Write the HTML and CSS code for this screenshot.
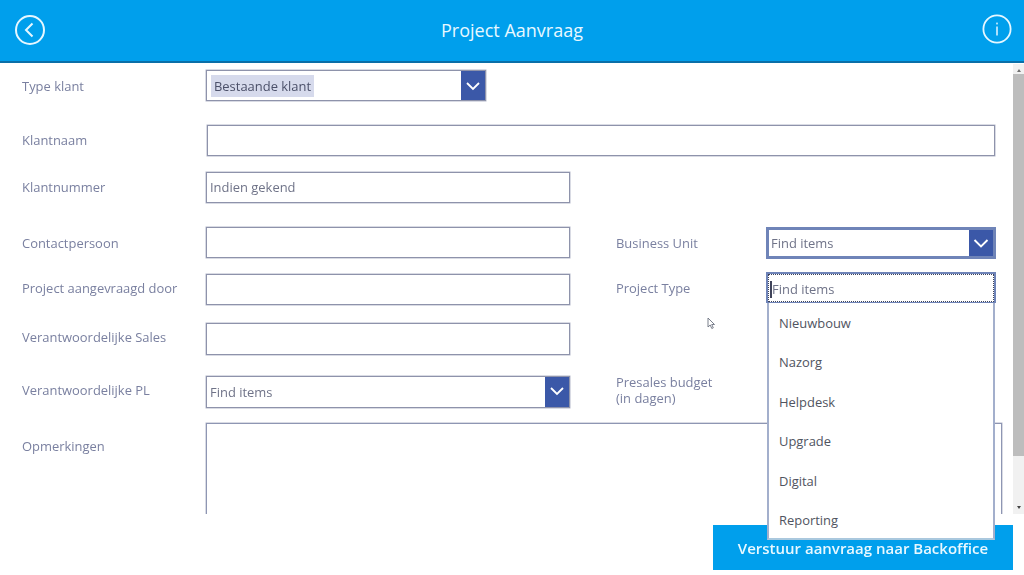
FILE: index.html
```html
<!DOCTYPE html>
<html lang="nl">
<head>
<meta charset="utf-8">
<title>Project Aanvraag</title>
<link rel="stylesheet" href="styles.css">
</head>
<body>
<header class="topbar">
  <svg class="icon" viewBox="0 0 30 30" width="30" height="30"><circle cx="15" cy="15" r="14" fill="none" stroke="#e6f7ff" stroke-width="2"/><path d="M17.500 8.500 11 15l6.500 6.500" fill="none" stroke="#e6f7ff" stroke-width="2"/></svg>
  <h1 class="title">Project Aanvraag</h1>
  <svg class="icon icon-info" viewBox="0 0 30 30" width="30" height="30"><circle cx="15" cy="15" r="13.600" fill="none" stroke="#e6f7ff" stroke-width="1.800"/><rect x="14.200" y="12.500" width="1.600" height="9" fill="#d8f1ff"/><rect x="14.200" y="8.600" width="1.600" height="1.800" fill="#d8f1ff"/></svg>
</header>
<div class="workspace">
  <form class="form">
    <div class="row row-1">
      <label class="label">Type klant</label>
      <div class="box combo combo-type">
        <span class="combo-value"><span class="chip">Bestaande klant</span></span>
        <span class="arrow"><svg viewBox="0 0 24 29" width="24" height="29"><path d="M6 12l6 6 6-6" fill="none" stroke="#fff" stroke-width="1.800"/></svg></span>
      </div>
    </div>
    <div class="row row-2">
      <label class="label label-up">Klantnaam</label>
      <div class="box field-wide"></div>
    </div>
    <div class="row row-3">
      <label class="label label-up">Klantnummer</label>
      <div class="box field"><span class="hint">Indien gekend</span></div>
    </div>
    <div class="row row-4">
      <label class="label">Contactpersoon</label>
      <div class="box field"></div>
      <label class="label label-side">Business Unit</label>
      <div class="box combo combo-side">
        <span class="combo-value"><span class="hint">Find items</span></span>
        <span class="arrow"><svg viewBox="0 0 24 26" width="24" height="26"><path d="M5.500 10l6.500 6.500 6.500-6.500" fill="none" stroke="#fff" stroke-width="1.900"/></svg></span>
      </div>
    </div>
    <div class="row row-5">
      <label class="label">Project aangevraagd door</label>
      <div class="box field field-low"></div>
      <label class="label label-side">Project Type</label>
      <div class="search">
        <div class="search-focus"><span class="caret"></span><span>Find items</span></div>
        <ul class="menu">
          <li>Nieuwbouw</li>
          <li>Nazorg</li>
          <li>Helpdesk</li>
          <li>Upgrade</li>
          <li>Digital</li>
          <li>Reporting</li>
        </ul>
      </div>
    </div>
    <div class="row row-6">
      <label class="label label-top">Verantwoordelijke Sales</label>
      <div class="box field field-tall"></div>
    </div>
    <div class="row row-7">
      <label class="label label-top">Verantwoordelijke PL</label>
      <div class="box combo combo-pl">
        <span class="combo-value"><span class="hint">Find items</span></span>
        <span class="arrow"><svg viewBox="0 0 24 28" width="24" height="28"><path d="M6 11l6 6 6-6" fill="none" stroke="#fff" stroke-width="1.800"/></svg></span>
      </div>
      <label class="label label-side label-two">Presales budget<br>(in dagen)</label>
    </div>
    <div class="row row-8">
      <label class="label label-notes">Opmerkingen</label>
      <div class="notes"></div>
    </div>
  </form>
  <div class="scrollbar">
    <span class="scroll-up"></span>
    <span class="thumb"></span>
    <span class="scroll-down"></span>
  </div>
</div>
<footer class="actions">
  <button class="submit" type="button">Verstuur aanvraag naar Backoffice</button>
</footer>
<svg class="pointer" viewBox="0 0 9 13" width="9" height="13"><path d="M1 1v9l2.200-2 1.600 3.500 1.500-.7L4.700 7.500H7.500z" fill="#fff" stroke="#6c7280" stroke-width=".9"/></svg>
</body>
</html>
```
FILE: styles.css
```css
* { box-sizing: border-box; }
html, body { margin: 0; height: 575px; overflow: hidden; }
body { position: relative; background: #fff; font-family: "Open Sans", sans-serif; font-size: 12.950px; color: #7a80a0; filter: blur(.3px); }

.topbar { height: 63px; padding: 0 12px 3px 15px; display: flex; align-items: center; justify-content: space-between; background: #009fec; border-bottom: 2px solid #0a6fa8; }
.icon { display: block; margin-top: 2px; }
.icon-info { margin-top: 0; }
.title { margin: 2px 3px 0 0; color: #e8f8ff; font-size: 18px; font-weight: 400; }

.workspace { height: 451px; display: flex; }
.form { width: 1013px; padding-top: 7px; }
.row { display: flex; align-items: flex-start; padding-left: 22px; }
.row-2 { margin-top: 24px; }
.row-3 { margin-top: 16px; }
.row-4 { margin-top: 24px; }
.row-5 { margin-top: 13px; }
.row-6 { margin-top: 18px; }
.row-7 { margin-top: 21px; }
.row-8 { margin-top: 15px; }

.label { width: 184px; flex: none; line-height: 18px; padding-top: 7px; }
.label-up { padding-top: 6px; }
.label-top { padding-top: 5px; }
.label-side { width: 150px; margin-left: 46px; }
.label-two { margin-top: -2px; padding-top: 0; line-height: 16px; }
.label-notes { padding-top: 14px; }

.box { height: 31px; background: #fff; border: 1px solid #8e93ab; box-shadow: 0 0 0 .5px #b4b8c9; }
.field { width: 364px; display: flex; align-items: center; padding: 0 0 1px 3px; }
.field-low { margin-top: 2px; }
.field-tall { height: 32px; }
.field-wide { width: 788px; margin-left: 1px; }
.hint { color: #6f7388; }

.combo { display: flex; align-items: stretch; }
.combo-value { flex: 1; display: flex; align-items: center; padding-left: 3px; }
.combo-type { width: 280px; }
.combo-type .combo-value { padding-left: 4px; }
.combo-pl { width: 364px; height: 32px; }
.combo-side { width: 230px; height: 32px; border: 3px solid #6f84b8; box-shadow: none; }
.combo-side .combo-value { padding-left: 2px; }
.chip { padding: 2px 3px; background: #d6daec; color: #4b5069; line-height: 18px; }
.arrow { width: 24px; flex: none; background: #3b58a8; }
.arrow svg { display: block; }

.search { width: 230px; height: 31px; position: relative; border: 2px solid #6f84b8; border-bottom-width: 1px; background: #fff; }
.search-focus { height: 28px; padding: 2px 0 0 1px; display: flex; align-items: center; border: 1px dotted #3f4358; color: #6f7388; }
.caret { width: 2px; height: 17px; background: #40445a; }
.menu { position: absolute; z-index: 2; left: -1px; top: 29px; width: 228px; height: 237px; margin: 0; padding: 0; list-style: none; background: #fff; border: 2px solid #a3afcc; border-top: 0; border-bottom-color: #aac8de; }
.menu li { height: 39.500px; padding: 0 0 0 10px; display: flex; align-items: center; color: #50545f; }

.notes { width: 796px; height: 91px; background: #fff; border: 1px solid #8e96b3; border-bottom: 0; box-shadow: 0 0 0 .5px #b4b8c9; clip-path: inset(-2px -2px 0 -2px); }

.scrollbar { width: 11px; margin-top: 1px; display: flex; flex-direction: column; align-items: center; background: #f1f1f1; }
.scroll-up, .scroll-down { width: 0; height: 0; border-left: 2px solid transparent; border-right: 2px solid transparent; }
.scroll-up { margin: 5px 0 2px; border-bottom: 3px solid #707070; }
.thumb { width: 11px; height: 382px; background: #bdbdbd; }
.scroll-down { margin-top: auto; margin-bottom: 5px; border-top: 3px solid #444; }

.actions { display: flex; justify-content: flex-end; padding: 11px 11px 0 0; }
.submit { width: 300px; height: 45px; border: 0; background: #009fec; color: #e8f8ff; font: 600 15px "Open Sans", sans-serif; }

.pointer { position: absolute; left: 707px; top: 317px; }
```
